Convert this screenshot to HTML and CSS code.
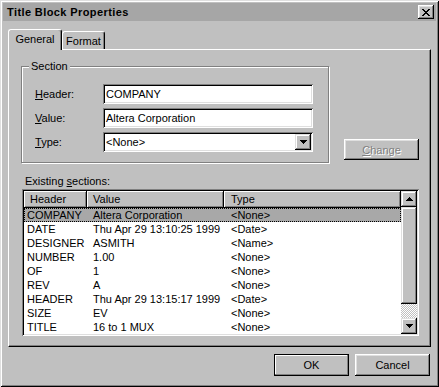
FILE: index.html
```html
<!DOCTYPE html>
<html>
<head>
<meta charset="utf-8">
<title>Title Block Properties</title>
<link rel="stylesheet" href="styles.css">
</head>
<body>
<div class="win">
  <div class="titlebar">
    <span class="title">Title Block Properties</span>
    <div class="close">
      <svg width="8" height="7" viewBox="0 0 8 7" shape-rendering="crispEdges"><path d="M0 0h2v1h-2zM6 0h2v1h-2zM1 1h2v1h-2zM5 1h2v1h-2zM2 2h4v1h-4zM3 3h2v1h-2zM2 4h4v1h-4zM1 5h2v1h-2zM5 5h2v1h-2zM0 6h2v1h-2zM6 6h2v1h-2z" fill="#000"/></svg>
    </div>
  </div>
  <div class="body">
    <div class="tabs">
      <div class="tab sel">General</div>
      <div class="tab">Format</div>
    </div>
    <div class="panel">
      <div class="top-row">
        <div class="group">
          <div class="legend">Section</div>
          <div class="fields">
            <div class="field"><span class="lbl"><u>H</u>eader:</span><div class="input">COMPANY</div></div>
            <div class="field"><span class="lbl"><u>V</u>alue:</span><div class="input">Altera Corporation</div></div>
            <div class="field"><span class="lbl"><u>T</u>ype:</span><div class="input combo"><span>&lt;None&gt;</span><div class="dd"><svg width="7" height="4" viewBox="0 0 7 4" shape-rendering="crispEdges"><path d="M0 0h7v1h-7zM1 1h5v1h-5zM2 2h3v1h-3zM3 3h1v1h-1z" fill="#000"/></svg></div></div></div>
          </div>
        </div>
        <div class="btn change disabled"><u>C</u>hange</div>
      </div>
      <div class="list-label">Existing <u>s</u>ections:</div>
      <div class="list">
        <div class="list-main">
          <div class="lhead">
            <div class="hcell">Header</div>
            <div class="hcell">Value</div>
            <div class="hcell last">Type</div>
          </div>
          <div class="row selected"><span>COMPANY</span><span>Altera Corporation</span><span>&lt;None&gt;</span></div>
          <div class="row"><span>DATE</span><span>Thu Apr 29 13:10:25 1999</span><span>&lt;Date&gt;</span></div>
          <div class="row"><span>DESIGNER</span><span>ASMITH</span><span>&lt;Name&gt;</span></div>
          <div class="row"><span>NUMBER</span><span>1.00</span><span>&lt;None&gt;</span></div>
          <div class="row"><span>OF</span><span>1</span><span>&lt;None&gt;</span></div>
          <div class="row"><span>REV</span><span>A</span><span>&lt;None&gt;</span></div>
          <div class="row"><span>HEADER</span><span>Thu Apr 29 13:15:17 1999</span><span>&lt;Date&gt;</span></div>
          <div class="row"><span>SIZE</span><span>EV</span><span>&lt;None&gt;</span></div>
          <div class="row"><span>TITLE</span><span>16 to 1 MUX</span><span>&lt;None&gt;</span></div>
        </div>
        <div class="vscroll">
          <div class="sbtn"><svg width="7" height="4" viewBox="0 0 7 4" shape-rendering="crispEdges"><path d="M3 0h1v1h-1zM2 1h3v1h-3zM1 2h5v1h-5zM0 3h7v1h-7z" fill="#000"/></svg></div>
          <div class="thumb"></div>
          <div class="track"></div>
          <div class="sbtn"><svg width="7" height="4" viewBox="0 0 7 4" shape-rendering="crispEdges"><path d="M0 0h7v1h-7zM1 1h5v1h-5zM2 2h3v1h-3zM3 3h1v1h-1z" fill="#000"/></svg></div>
        </div>
      </div>
    </div>
    <div class="actions">
      <div class="btn default">OK</div>
      <div class="btn">Cancel</div>
    </div>
  </div>
</div>
</body>
</html>
```
FILE: styles.css
```css
* { box-sizing: border-box; }
html, body { margin: 0; padding: 0; background: #c0c0c0; }
body {
  font-family: "Liberation Sans", Arial, sans-serif;
  font-size: 11px;
  color: #000;
}
u { text-decoration: underline; text-underline-offset: 1px; }

.win {
  width: 439px;
  height: 387px;
  padding: 3px;
  background: #c0c0c0;
  box-shadow: inset 1px 1px #dfdfdf, inset -1px -1px #000, inset 2px 2px #fff, inset -2px -2px #808080;
}

.titlebar {
  height: 18px;
  background: #a6a6a6;
  display: flex;
  align-items: center;
  justify-content: space-between;
  padding: 0 2px 0 4px;
}
.title { font-weight: bold; font-size: 11px; letter-spacing: 0.4px; }
.close {
  width: 16px;
  height: 14px;
  background: #c0c0c0;
  display: flex;
  align-items: center;
  justify-content: center;
  box-shadow: inset -1px -1px #000, inset 1px 1px #fff, inset -2px -2px #808080, inset 2px 2px #dfdfdf;
}

.body { padding: 0 5px; }

.tabs {
  margin-top: 8px;
  height: 20px;
  display: flex;
  align-items: flex-end;
}
.tab {
  height: 18px;
  padding: 0 5px;
  display: flex;
  align-items: center;
  border-top: 1px solid #fff;
  border-left: 1px solid #fff;
  border-right: 1px solid #000;
  border-radius: 3px 3px 0 0;
  box-shadow: inset -1px 0 #808080;
  background: #c0c0c0;
}
.tab.sel {
  height: 21px;
  width: 54px;
  margin-bottom: -1px;
  justify-content: center;
  position: relative;
  z-index: 1;
  padding-bottom: 2px;
}
.tab:not(.sel) { width: 43px; justify-content: center; }

.panel {
  height: 298px;
  border-top: 1px solid #fff;
  border-left: 1px solid #fff;
  border-right: 1px solid #000;
  border-bottom: 1px solid #000;
  box-shadow: inset -1px -1px #808080;
  padding: 16px 0 0 12px;
}

.top-row { display: flex; align-items: flex-end; }

.group {
  width: 308px;
  height: 97px;
  border: 1px solid #808080;
  box-shadow: 1px 1px #fff, inset 1px 1px #fff;
}
.legend {
  display: table;
  margin: -7px 0 0 7px;
  padding: 0 2px;
  line-height: 13px;
  background: #c0c0c0;
}
.fields {
  margin-top: 11px;
  display: flex;
  flex-direction: column;
  gap: 4px;
}
.field { display: flex; align-items: center; padding-left: 13px; }
.lbl { width: 68px; }
.input {
  width: 210px;
  height: 20px;
  line-height: 20px;
  padding-left: 3px;
  background: #fff;
  box-shadow: inset 1px 1px #808080, inset -1px -1px #fff, inset 2px 2px #000, inset -2px -2px #dfdfdf;
}
.combo { display: flex; align-items: center; justify-content: space-between; padding-right: 2px; }
.dd {
  width: 16px;
  height: 16px;
  background: #c0c0c0;
  display: flex;
  align-items: center;
  justify-content: center;
  box-shadow: inset -1px -1px #000, inset 1px 1px #dfdfdf, inset -2px -2px #808080, inset 2px 2px #fff;
}

.btn {
  width: 75px;
  height: 22px;
  display: flex;
  align-items: center;
  justify-content: center;
  background: #c0c0c0;
  box-shadow: inset -1px -1px #000, inset 1px 1px #fff, inset -2px -2px #808080, inset 2px 2px #dfdfdf;
}
.btn.change { height: 21px; margin: 0 0 3px 15px; }
.btn.disabled { color: #808080; text-shadow: 1px 1px #fff; }
.btn.default {
  border: 1px solid #000;
  box-shadow: inset -1px -1px #808080, inset 1px 1px #fff;
}

.list-label { margin: 12px 0 0 4px; line-height: 13px; }

.list {
  margin: 1px 0 0 1px;
  width: 397px;
  height: 147px;
  padding: 2px;
  display: flex;
  background: #fff;
  box-shadow: inset 1px 1px #808080, inset -1px -1px #fff, inset 2px 2px #000, inset -2px -2px #dfdfdf;
}
.list-main { flex: 1; min-width: 0; }
.lhead {
  display: grid;
  grid-template-columns: 63px 137px 1fr;
  height: 17px;
  background: #c0c0c0;
}
.hcell {
  padding-left: 6px;
  line-height: 16px;
  box-shadow: inset -1px -1px #000, inset 1px 1px #fff, inset -2px -2px #808080;
}
.hcell:nth-child(3) { padding-left: 7px; }
.row {
  display: grid;
  grid-template-columns: 63px 137px 1fr;
  height: 14px;
  line-height: 14px;
  white-space: nowrap;
}
.row span:nth-child(1) { padding-left: 3px; }
.row span:nth-child(2) { padding-left: 6px; }
.row span:nth-child(3) { padding-left: 7px; }
.row.selected {
  background: #a8a8a8;
  outline: 1px dotted #000;
  outline-offset: -1px;
}

.vscroll { width: 16px; display: flex; flex-direction: column; }
.sbtn {
  height: 16px;
  background: #c0c0c0;
  display: flex;
  align-items: center;
  justify-content: center;
  box-shadow: inset -1px -1px #000, inset 1px 1px #dfdfdf, inset -2px -2px #808080, inset 2px 2px #fff;
}
.thumb {
  height: 97px;
  background: #c0c0c0;
  box-shadow: inset -1px -1px #000, inset 1px 1px #dfdfdf, inset -2px -2px #808080, inset 2px 2px #fff;
}
.track {
  flex: 1;
  background: repeating-conic-gradient(#fff 0 25%, #c0c0c0 0 50%) 0 0 / 2px 2px;
}

.actions {
  margin-top: 7px;
  display: flex;
  justify-content: flex-end;
  gap: 6px;
  padding-right: 1px;
}
```
